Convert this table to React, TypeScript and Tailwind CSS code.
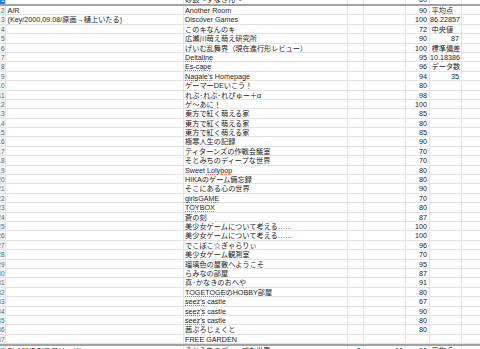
import React from "react";

type Row = {
  n: number;
  a?: string;
  b?: React.ReactNode;
  c?: string;
  d?: string;
  e?: string;
  f?: string;
  fRight?: boolean;
};

const U = ({ children }: { children: React.ReactNode }) => (
  <span className="underline decoration-dotted decoration-[#e86a6a] decoration-1 underline-offset-[0.5px]">
    {children}
  </span>
);

const rows: Row[] = [
  { n: 2, a: "AIR", b: "Another Room", e: "90", f: "平均点" },
  { n: 3, a: "(Key/2000.09.08/原画→樋上いたる)", b: "Discover Games", e: "100", f: "86.22857", fRight: true },
  { n: 4, b: "このキなんのキ", e: "72", f: "中央値" },
  { n: 5, b: "広瀬川萌え萌え研究所", e: "90", f: "87", fRight: true },
  { n: 6, b: "げいむ乱舞界（現在進行形レビュー）", e: "100", f: "標準偏差" },
  { n: 7, b: <U>Deltaline</U>, e: "95", f: "10.18386", fRight: true },
  { n: 8, b: <U>Es-cape</U>, e: "96", f: "データ数" },
  { n: 9, b: <><U>Nagale's</U> Homepage</>, e: "94", f: "35", fRight: true },
  { n: 10, b: "ゲーマーDEいこう！", e: "80" },
  { n: 11, b: "れぷ･れぷ･れぴゅー＋α", e: "98" },
  { n: 12, b: "ゲ～あに！", e: "100" },
  { n: 13, b: "東方で紅く萌える家", e: "85" },
  { n: 14, b: "東方で紅く萌える家", e: "80" },
  { n: 15, b: "東方で紅く萌える家", e: "85" },
  { n: 16, b: "極寒人生の記録", e: "90" },
  { n: 17, b: "ティターンズの作戦会議室", e: "70" },
  { n: 18, b: "そとみちのディープな世界", e: "70" },
  { n: 19, b: <>Sweet <U>Lolypop</U></>, e: "80" },
  { n: 20, b: "HIKAのゲーム備忘録", e: "80" },
  { n: 21, b: "そこにある心の世界", e: "90" },
  { n: 22, b: <U>girlsGAME</U>, e: "70" },
  { n: 23, b: <U>TOYBOX</U>, e: "80" },
  { n: 24, b: "蒼の刻", e: "87" },
  { n: 25, b: "美少女ゲームについて考える……", e: "100" },
  { n: 26, b: "美少女ゲームについて考える……", e: "100" },
  { n: 27, b: "でこぼこ☆ぎゃらりぃ", e: "96" },
  { n: 28, b: "美少女ゲーム観測室", e: "70" },
  { n: 29, b: "瑠璃色の屋敷へようこそ", e: "95" },
  { n: 30, b: "らみなの部屋", e: "87" },
  { n: 31, b: "真･かなきのおへや", e: "91" },
  { n: 32, b: <><U>TOGETOGE</U>のHOBBY部屋</>, e: "80" },
  { n: 33, b: <><U>seez's</U> castle</>, e: "67" },
  { n: 34, b: <><U>seez's</U> castle</>, e: "90" },
  { n: 35, b: <><U>seez's</U> castle</>, e: "80" },
  { n: 36, b: "茜ぷろじぇくと", e: "80" },
  { n: 37, b: "FREE GARDEN" },
];

function SheetRow({ r, selected, noBorder }: { r: Row; selected?: boolean; noBorder?: boolean }) {
  const bb = noBorder ? "" : "border-b border-[#e3e3e3]";
  return (
    <div className="flex h-[9.4px] leading-[9.4px]">
      <div
        className={`w-[6px] shrink-0 flex justify-end overflow-hidden pr-[0.5px] border-r border-[#c8c8c8] text-[6.5px] ${
          selected ? "bg-[#2f78d6] text-white" : `bg-[#f3f3f3] text-[#666] ${bb}`
        }`}
      >
        <span className="shrink-0">{r.n}</span>
      </div>
      <div className={`w-[178px] shrink-0 pl-[1.5px] whitespace-nowrap border-r border-[#e3e3e3] ${bb}`}>{r.a}</div>
      <div className={`w-[164px] shrink-0 pl-[1px] whitespace-nowrap border-r border-[#e3e3e3] ${bb}`}>{r.b}</div>
      <div className={`w-[16px] shrink-0 pr-[2px] text-right whitespace-nowrap border-r border-[#e3e3e3] ${bb}`}>{r.c}</div>
      <div className={`w-[42px] shrink-0 pr-[2px] text-right whitespace-nowrap border-r border-[#e3e3e3] ${bb}`}>{r.d}</div>
      <div className={`w-[24px] shrink-0 pr-[2px] text-right whitespace-nowrap border-r border-[#e3e3e3] ${bb}`}>{r.e}</div>
      <div
        className={`w-[32px] shrink-0 whitespace-nowrap border-r border-[#e3e3e3] ${bb} ${
          r.fRight ? "text-right pr-[2px]" : "pl-[1.5px]"
        }`}
      >
        {r.f}
      </div>
      <div className={`flex-1 ${bb}`}></div>
    </div>
  );
}

export default function App() {
  return (
    <div className="w-[480px] h-[349px] overflow-hidden bg-white text-[#1a1a1a] text-[7.2px] font-['Liberation_Sans','Noto_Sans_CJK_JP',sans-serif]">
      <div className="-mt-[5.4px]">
        <SheetRow r={{ n: 1, b: "砂鼓〜すなきん〜", e: "60" }} selected noBorder />
        <div className="h-[2px] bg-[#a2a2a2]" />
        {rows.map((r) => (
          <SheetRow key={r.n} r={r} />
        ))}
        <div className="h-[2px] bg-[#a2a2a2]" />
        <SheetRow
          r={{ n: 38, a: "SL MINDS(エアリィド)", b: "そとみちのディープな世界", c: "5", d: "10", e: "50", f: "平均点" }}
        />
      </div>
    </div>
  );
}
